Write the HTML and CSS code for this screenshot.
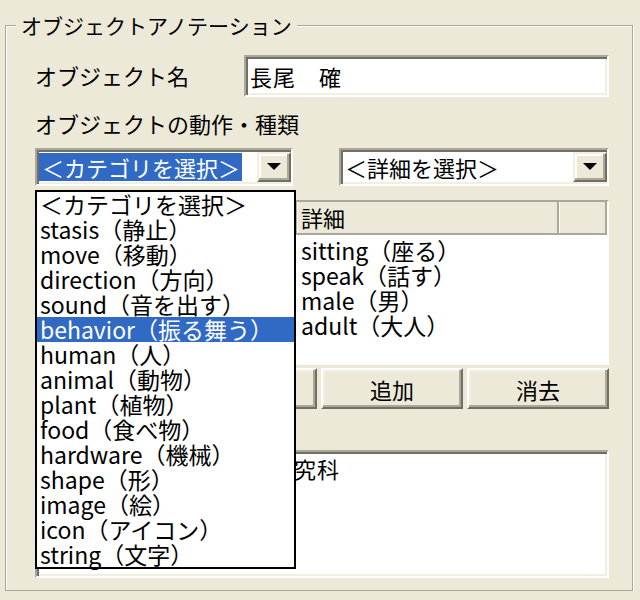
FILE: index.html
```html
<!DOCTYPE html>
<html lang="ja">
<head>
    <meta charset="UTF-8">
    <meta name="viewport" content="width=device-width, initial-scale=1.0">
    <title>オブジェクトアノテーション</title>
    <link rel="stylesheet" href="styles.css">
</head>
<body>
    <fieldset class="group">
        <legend>オブジェクトアノテーション</legend>

        <div class="field-row">
            <label class="field-label" for="object-name">オブジェクト名</label>
            <div class="textbox sunken" id="object-name">長尾　確</div>
        </div>

        <div class="caption">オブジェクトの動作・種類</div>

        <div class="combo-row">
            <div class="combo combo-category sunken">
                <span class="combo-text"><span class="combo-selected">＜カテゴリを選択＞</span></span>
                <span class="combo-button">
                    <svg width="14" height="8" viewBox="0 0 14 8"><polygon points="0,0 14,0 7,7" fill="#000"/></svg>
                </span>

                <!-- opened drop-down list of the category combo -->
                <ul class="dropdown">
                    <li>＜カテゴリを選択＞</li>
                    <li>stasis（静止）</li>
                    <li>move（移動）</li>
                    <li>direction（方向）</li>
                    <li>sound（音を出す）</li>
                    <li class="selected">behavior（振る舞う）</li>
                    <li>human（人）</li>
                    <li>animal（動物）</li>
                    <li>plant（植物）</li>
                    <li>food（食べ物）</li>
                    <li>hardware（機械）</li>
                    <li>shape（形）</li>
                    <li>image（絵）</li>
                    <li>icon（アイコン）</li>
                    <li>string（文字）</li>
                </ul>
            </div>
            <div class="combo combo-detail sunken">
                <span class="combo-text">＜詳細を選択＞</span>
                <span class="combo-button">
                    <svg width="14" height="8" viewBox="0 0 14 8"><polygon points="0,0 14,0 7,7" fill="#000"/></svg>
                </span>
            </div>
        </div>

        <!-- the first column is covered by the open list -->
        <div class="listview">
            <div class="lv-header">
                <div class="lv-col"></div>
                <div class="lv-col">詳細</div>
                <div class="lv-col"></div>
            </div>
            <div class="lv-body">
                <div class="lv-row"><span></span><span>sitting（座る）</span></div>
                <div class="lv-row"><span></span><span>speak（話す）</span></div>
                <div class="lv-row"><span></span><span>male（男）</span></div>
                <div class="lv-row"><span></span><span>adult（大人）</span></div>
            </div>
        </div>

        <div class="buttons">
            <button></button>
            <button>追加</button>
            <button>消去</button>
        </div>

        <div class="caption"></div>
        <div class="textarea sunken">名古屋大学　情報科学研究科</div>
    </fieldset>
</body>
</html>
```

FILE: styles.css
```css
body {
    margin: 0;
    background-color: #ece9d8;
    font-family: "Noto Sans CJK JP", sans-serif;
    font-size: 22px;
    color: #000;
}

.group {
    margin: 11px 7px 0 5px;
    padding: 16px 23px 12px 29px;
    min-width: 0;
    border: 1px solid #aca899;
    box-shadow: inset 1px 1px 0 #fff, 1px 1px 0 #fff;
}

.group legend {
    margin-left: -19px;
    padding: 0 5px;
    font-size: 21px;
    line-height: 28px;
    background-color: #ece9d8;
}

/* 3D borders */
.sunken {
    box-sizing: border-box;
    background-color: #fff;
    border: 2px solid;
    border-color: #aca899 #fff #fff #aca899;
    box-shadow: inset 2px 2px 0 #716f64, inset -2px -2px 0 #f1efe2;
}

.field-row {
    display: flex;
    align-items: center;
}

.field-label {
    width: 209px;
    line-height: 28px;
    margin-top: -2px;
}

.textbox {
    flex: 1;
    height: 42px;
    padding: 0 4px;
    line-height: 38px;
    letter-spacing: 1px;
}

.caption {
    height: 28px;
    margin-top: 12px;
    line-height: 28px;
}

.combo-row {
    display: flex;
    gap: 46px;
    margin-top: 11px;
}

.combo {
    position: relative;
    display: flex;
    align-items: center;
    height: 38px;
    padding: 2px 0 2px 2px;
}

.combo-category {
    width: 258px;
}

.combo-detail {
    flex: 1;
}

.combo-text {
    flex: 1;
    padding-left: 2px;
    line-height: 28px;
    white-space: nowrap;
}

.combo-category .combo-text {
    padding-left: 0;
}

.combo-selected {
    display: inline-block;
    padding: 0 2px 0 3px;
    background-color: #316ac5;
    color: #fff;
}

.combo-button {
    display: flex;
    align-items: center;
    justify-content: center;
    box-sizing: border-box;
    width: 34px;
    height: 100%;
    background-color: #ece9d8;
    border: 2px solid;
    border-color: #f1efe2 #716f64 #716f64 #f1efe2;
    box-shadow: inset -2px -2px 0 #aca899, inset 2px 2px 0 #fff;
}

.dropdown {
    position: absolute;
    top: 40px;
    left: -2px;
    z-index: 2;
    box-sizing: border-box;
    width: 261px;
    margin: 0;
    padding: 0;
    list-style: none;
    background-color: #fff;
    border: 2px solid #000;
    font-size: 23px;
}

.dropdown li {
    padding-left: 3px;
    line-height: 25px;
    height: 25px;
    white-space: nowrap;
}

.dropdown li.selected {
    background-color: #316ac5;
    color: #fff;
}

.listview {
    margin-top: 14px;
    height: 165px;
    box-sizing: border-box;
    background-color: #fff;
    border: 2px solid;
    border-color: #aca899 #fff #fff #aca899;
    font-size: 23px;
}

.lv-header,
.lv-row {
    display: grid;
    grid-template-columns: 260px 262px 1fr;
}

.lv-header {
    height: 33px;
    background-color: #ece9d8;
    border-bottom: 2px solid #aca899;
    box-sizing: border-box;
}

.lv-col {
    padding-left: 3px;
    line-height: 31px;
    border-left: 1px solid #fff;
    border-right: 2px solid #aca899;
    white-space: nowrap;
    font-size: 22px;
}

.lv-body {
    padding-top: 3px;
}

.lv-row span {
    padding-left: 4px;
    height: 25px;
    line-height: 25px;
    white-space: nowrap;
}

.buttons {
    display: flex;
    justify-content: flex-end;
    gap: 4px;
    margin-top: 3px;
}

button {
    width: 142px;
    height: 41px;
    padding: 0;
    font-family: inherit;
    font-size: 22px;
    color: #000;
    background-color: #ece9d8;
    border: 2px solid;
    border-color: #fff #716f64 #716f64 #fff;
    box-shadow: inset -2px -2px 0 #aca899, inset 2px 2px 0 #f1efe2;
}

.buttons + .caption {
    margin-top: 6px;
    margin-bottom: 7px;
}

.textarea {
    height: 128px;
    padding: 2px 4px;
    line-height: 28px;
    letter-spacing: 1px;
}
```
